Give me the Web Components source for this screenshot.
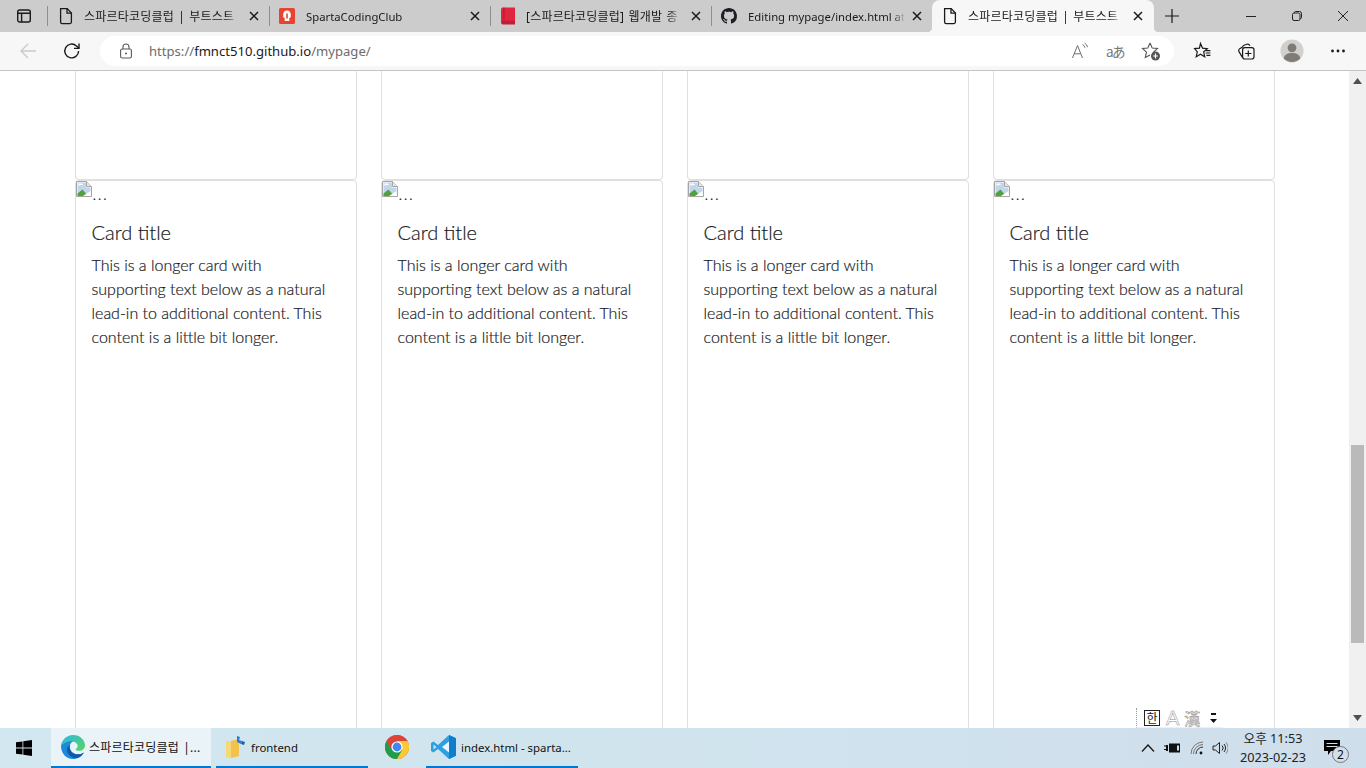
<!DOCTYPE html>
<html>
<head>
<meta charset="utf-8">
<title>스파르타코딩클럽 | 부트스트랩</title>
<style>
  html, body { margin: 0; height: 100%; overflow: hidden; }
  body { font-family: "Noto Sans", "Noto Sans CJK KR", sans-serif; }
</style>
</head>
<body>

<app-window>
  <tab-strip>
    <browser-tab label="스파르타코딩클럽 | 부트스트" icon="page"></browser-tab>
    <browser-tab label="SpartaCodingClub" icon="sparta" latin></browser-tab>
    <browser-tab label="[스파르타코딩클럽] 웹개발 종" icon="book"></browser-tab>
    <browser-tab label="Editing mypage/index.html at" icon="github" latin last></browser-tab>
    <browser-tab label="스파르타코딩클럽 | 부트스트" icon="page" active></browser-tab>
  </tab-strip>
  <address-bar></address-bar>
  <page-view>
    <card-grid>
      <info-card stub></info-card>
      <info-card stub></info-card>
      <info-card stub></info-card>
      <info-card stub></info-card>
      <info-card title="Card title">This is a longer card with supporting text below as a natural lead-in to additional content. This content is a little bit longer.</info-card>
      <info-card title="Card title">This is a longer card with supporting text below as a natural lead-in to additional content. This content is a little bit longer.</info-card>
      <info-card title="Card title">This is a longer card with supporting text below as a natural lead-in to additional content. This content is a little bit longer.</info-card>
      <info-card title="Card title">This is a longer card with supporting text below as a natural lead-in to additional content. This content is a little bit longer.</info-card>
    </card-grid>
    <ime-bar></ime-bar>
    <page-scrollbar></page-scrollbar>
  </page-view>
  <task-bar></task-bar>
</app-window>

<script>
const TAB_ICONS = {
  page: `<svg width="16" height="18" viewBox="0 0 16 18" fill="none" stroke="#1a1a1a" stroke-width="1.3"><path d="M2.600 1.600h6.600l4.200 4.400v9a1.600 1.600 0 0 1-1.600 1.600H4.200a1.600 1.600 0 0 1-1.600-1.600z"/><path d="M9 1.600v4.600h4.400"/></svg>`,
  sparta: `<svg width="16" height="16" viewBox="0 0 16 16"><rect width="16" height="16" rx="1.500" fill="#e8432e"/><path d="M8 2.600c2.600 0 3.800 1.700 3.800 4v2.600l-1.500.9v2.900H5.700v-2.900l-1.500-.9V6.600c0-2.300 1.200-4 3.800-4z" fill="#fff"/><path d="M7.200 5.400h1.600v5H7.200z" fill="#e8432e"/></svg>`,
  book: `<svg width="16" height="18" viewBox="0 0 16 18"><path d="M1 2.400A1.800 1.800 0 0 1 2.800.6H15v13.600H3A2 2 0 0 0 1 16z" fill="#e0263f"/><path d="M1 15.600a2 2 0 0 1 2-1.800h12v3.600H2.800A1.800 1.800 0 0 1 1 15.600z" fill="#c41d33"/><path d="M3.400.6h1v13h-1z" fill="#b3182d"/></svg>`,
  github: `<svg width="16" height="16" viewBox="0 0 16 16" fill="#1b1f23"><path d="M8 0C3.580 0 0 3.580 0 8c0 3.540 2.290 6.530 5.470 7.590.4.070.55-.17.55-.38 0-.19-.01-.82-.01-1.490-2.010.37-2.530-.49-2.690-.94-.09-.23-.48-.94-.82-1.130-.28-.15-.68-.52-.01-.53.63-.01 1.080.58 1.230.82.72 1.210 1.870.87 2.330.66.070-.52.28-.87.51-1.070-1.780-.2-3.640-.89-3.640-3.950 0-.87.31-1.590.82-2.150-.08-.2-.36-1.020.08-2.120 0 0 .67-.21 2.200.82.64-.18 1.320-.27 2-.27s1.360.09 2 .27c1.530-1.040 2.200-.82 2.200-.82.44 1.100.16 1.920.08 2.120.51.56.82 1.270.82 2.150 0 3.070-1.870 3.750-3.650 3.950.29.25.54.73.54 1.480 0 1.070-.01 1.930-.01 2.200 0 .21.15.46.55.38A8.010 8.010 0 0 0 16 8c0-4.420-3.580-8-8-8z"/></svg>`
};

class TabStrip extends HTMLElement {
  constructor() {
    super();
    this.attachShadow({ mode: 'open' });
    this.shadowRoot.innerHTML = `
    <style>
      :host { display: flex; height: 32px; background: #cccccc; }
      .side { width: 48px; display: flex; align-items: center; justify-content: center; position: relative; padding-right: 1px; box-sizing: border-box; }
      .sep { position: absolute; left: 47px; top: 6px; height: 20px; width: 1px; background: #8f8f8f; }
      .tabs { display: flex; }
      .plus { width: 36px; display: flex; align-items: center; justify-content: center; }
      .spacer { flex: 1; }
      .ctl { width: 46px; display: flex; align-items: center; justify-content: center; }
    </style>
    <div class="side">
      <svg width="16" height="16" viewBox="0 0 16 16" fill="none" stroke="#1a1a1a" stroke-width="1.4"><rect x="1.700" y="2" width="12.600" height="12" rx="2"/><path d="M1.700 5.200h12.600M5.600 5.200V14"/></svg>
      <span class="sep"></span>
    </div>
    <div class="tabs"><slot></slot></div>
    <div class="plus"><svg width="16" height="16" viewBox="0 0 16 16" stroke="#1a1a1a" stroke-width="1.2"><path d="M8 1v14M1 8h14"/></svg></div>
    <div class="spacer"></div>
    <div class="ctl"><svg width="12" height="12" viewBox="0 0 12 12" stroke="#222" stroke-width="1"><path d="M1 6.500h10"/></svg></div>
    <div class="ctl"><svg width="12" height="12" viewBox="0 0 12 12" fill="none" stroke="#222" stroke-width="1"><rect x="1.500" y="3" width="7.500" height="7.500" rx="1.500"/><path d="M3.500 3V2.500a1 1 0 0 1 1-1h4a2 2 0 0 1 2 2v4a1 1 0 0 1-1 1H9"/></svg></div>
    <div class="ctl"><svg width="12" height="12" viewBox="0 0 12 12" stroke="#222" stroke-width="1"><path d="M1 1l10 10M11 1L1 11"/></svg></div>
    `;
  }
}

class BrowserTab extends HTMLElement {
  connectedCallback() {
    const label = this.getAttribute('label');
    const icon = TAB_ICONS[this.getAttribute('icon')];
    this.attachShadow({ mode: 'open' });
    this.shadowRoot.innerHTML = `
    <style>
      :host { display: flex; align-items: center; width: 221px; height: 32px; box-sizing: border-box; padding: 0 9px 0 10px; position: relative; font: 12px "Noto Sans", "Noto Sans CJK KR", sans-serif; letter-spacing: .2px; word-spacing: 1px; color: #1a1a1a; }
      :host([latin]) { font-size: 11.3px; letter-spacing: 0; word-spacing: 0; }
      :host([latin]) .icon { margin-right: 11px; }
      :host([latin]) .close { margin-left: 5px; }
      :host([active]) { width: 222px; padding-right: 10px; background: #f7f7f7; border-radius: 8px 8px 0 0; }
      :host(:not([active]):not([last]))::after { content: ""; position: absolute; right: -1px; top: 6px; height: 20px; width: 1px; background: #8f8f8f; z-index: 1; }
      :host([active])::before, :host([active])::after { content: ""; position: absolute; bottom: 0; width: 5px; height: 5px; }
      :host([active])::before { left: -5px; background: radial-gradient(circle at 0 0, transparent 5px, #f7f7f7 5.500px); }
      :host([active])::after { right: -5px; background: radial-gradient(circle at 100% 0, transparent 5px, #f7f7f7 5.500px); }
      .icon { width: 16px; height: 18px; flex: none; display: flex; align-items: center; justify-content: center; margin-right: 10px; }
      .label { flex: 1; min-width: 0; white-space: nowrap; overflow: hidden; -webkit-mask-image: linear-gradient(to left, transparent 0, #000 14px); mask-image: linear-gradient(to left, transparent 0, #000 14px); }
      .close { width: 12px; height: 12px; margin-left: 8px; flex: none; }
    </style>
    <span class="icon">${icon}</span>
    <span class="label">${label}</span>
    <svg class="close" viewBox="0 0 12 12" stroke="#1a1a1a" stroke-width="1.500"><path d="M2 2l8 8M10 2l-8 8"/></svg>
    `;
  }
}

class AddressBar extends HTMLElement {
  constructor() {
    super();
    this.attachShadow({ mode: 'open' });
    this.shadowRoot.innerHTML = `
    <style>
      :host { display: flex; align-items: center; height: 39px; box-sizing: border-box; background: #f7f7f7; border-bottom: 1px solid #c4c4c4; padding-left: 100px; position: relative; }
      .nav { position: absolute; top: 10px; }
      .pill { width: 1074px; height: 30px; box-sizing: border-box; background: #fff; border-radius: 15px; display: flex; align-items: center; padding: 0 13px 0 18px; }
      .url { margin-left: 15px; font: 13.1px "Noto Sans", sans-serif; color: #6c6c6c; flex: 1; white-space: nowrap; }
      .url b { font-weight: 400; color: #1a1a1a; }
      .right { display: flex; gap: 17px; align-items: center; }
      .trans { width: 18px; font: 13.500px/18px "Noto Sans CJK JP", sans-serif; color: #777; letter-spacing: -1.500px; white-space: nowrap; }
      .tools { display: flex; align-items: center; margin-left: 18px; }
      .tools > * { flex: none; }
    </style>
    <svg class="nav" style="left:19px" width="18" height="18" viewBox="0 0 18 18" fill="none" stroke="#c9c9c9" stroke-width="1.300"><path d="M17 9H2M9 2L2 9l7 7"/></svg>
    <svg class="nav" style="left:63px" width="18" height="18" viewBox="0 0 18 18" fill="none" stroke="#1a1a1a" stroke-width="1.400"><path d="M15.600 9a6.900 6.900 0 1 1-2.200-5.100L16 6.300"/><path d="M16 1.400v5h-5"/></svg>
    <div class="pill">
      <svg width="16" height="16" viewBox="0 0 16 16" fill="none" stroke="#5a5a5a" stroke-width="1.100"><rect x="2.600" y="6" width="10.800" height="9" rx="1.600"/><path d="M5 6V4a3 3 0 0 1 6 0v2"/><circle cx="8" cy="10.500" r="1" fill="#5a5a5a" stroke="none"/></svg>
      <span class="url">https://<b>fmnct510.github.io</b>/mypage/</span>
      <span class="right">
        <svg width="18" height="18" viewBox="0 0 18 18" fill="none" stroke="#6e6e6e" stroke-width="1"><path d="M1.500 16L6.500 3.500 11.500 16M3.300 11.800h6.400"/><path d="M11.500 2.500a5 5 0 0 1 2.500 3.200M13.600 1a7 7 0 0 1 3 4.200"/></svg>
        <span class="trans">aあ</span>
        <svg width="20" height="20" viewBox="0 0 20 20" fill="none" stroke="#555" stroke-width="1.100"><path d="M9 2l2.200 5 5.300.5-4 3.600 1 4.200M9 2L6.800 7l-5.300.5 4 3.600-1.200 5.300L9 14"/><circle cx="14.500" cy="15" r="4.500" fill="#555" stroke="none"/><path d="M14.500 12.600v4.800M12.100 15h4.800" stroke="#fff"/></svg>
      </span>
    </div>
    <div class="tools">
      <svg width="20" height="20" viewBox="0 0 20 20" fill="none" stroke="#1a1a1a" stroke-width="1.200"><path d="M8.500 2.500l2 4.600 4.800.5-3.600 3.200 1 4.900-4.200-2.500-4.300 2.500 1.100-4.900L2.600 7.600l4.800-.5z"/><path d="M14 9.600h4.400M13.600 12h4.800M14.400 14.400h4"/></svg>
      <svg style="margin-left:24px" width="20" height="20" viewBox="0 0 20 20" fill="none" stroke="#1a1a1a" stroke-width="1.200"><rect x="6.600" y="6.600" width="11.400" height="11.400" rx="2.200"/><path d="M12.300 9.400v6.200M9.200 12.500h6.200"/><path d="M6.400 16.400L3 10.600a2 2 0 0 1 .7-2.800l3.600-2.200M13.800 4.700a2.400 2.400 0 0 0-3-1.400L8 4.300a2 2 0 0 0-1.300 2"/></svg>
      <svg style="margin-left:24px" width="24" height="24" viewBox="0 0 24 24"><circle cx="12" cy="12" r="11.500" fill="#d2d0ce"/><circle cx="12" cy="8.800" r="4.400" fill="#7f7c78"/><path d="M3.800 19.500c.6-3.800 3.600-5.400 8.200-5.400s7.600 1.600 8.200 5.400a11.500 11.500 0 0 1-16.400 0z" fill="#7f7c78"/></svg>
      <svg style="margin-left:26px" width="16" height="16" viewBox="0 0 16 16" fill="#1a1a1a"><circle cx="2.500" cy="8" r="1.400"/><circle cx="8" cy="8" r="1.400"/><circle cx="13.500" cy="8" r="1.400"/></svg>
    </div>
    `;
  }
}

class PageView extends HTMLElement {
  constructor() {
    super();
    this.attachShadow({ mode: 'open' });
    this.shadowRoot.innerHTML = `
    <style>
      :host { display: block; height: 657px; overflow: hidden; background: #fff; position: relative; box-sizing: border-box; padding-left: 75px; }
    </style>
    <slot></slot>
    `;
  }
}

class CardGrid extends HTMLElement {
  constructor() {
    super();
    this.attachShadow({ mode: 'open' });
    this.shadowRoot.innerHTML = `
    <style>
      :host { display: grid; grid-template-columns: repeat(4, 282px); column-gap: 24px; grid-template-rows: 109px 600px; }
    </style>
    <slot></slot>
    `;
  }
}

class InfoCard extends HTMLElement {
  connectedCallback() {
    this.attachShadow({ mode: 'open' });
    const stub = this.hasAttribute('stub');
    this.shadowRoot.innerHTML = `
    <style>
      :host { display: block; box-sizing: border-box; border: 1px solid #dfdfdf; border-radius: 4px; background: #fff; font-family: "Lato", "Noto Sans", sans-serif; font-weight: 300; color: #15181b; -webkit-text-stroke: .2px #212529; }
      :host([stub]) { border-top: 0; border-radius: 0 0 4px 4px; }
      .top { display: flex; align-items: flex-end; height: 24px; font-size: 16px; line-height: 14px; }
      .top span { letter-spacing: 1.500px; margin: 0 0 4px .5px; }
      .body { padding: 16px 16px 16px 15.500px; padding-top: 15px; }
      h5 { margin: 0 0 9px; font-size: 20px; font-weight: 300; line-height: 24px; }
      p { margin: 0; font-size: 16px; line-height: 24px; }
    </style>
    ${stub ? '' : `
    <div class="top">
      <svg width="16" height="16" viewBox="0 0 16 16" style="align-self:flex-start"><path d="M.5.5h10l5 5v10H.5z" fill="#fff" stroke="#a6a6a6"/><path d="M10.500.5v5h5" fill="#e6e6e6" stroke="#a6a6a6"/><path d="M1.500 1.500h8.500v5h4.500v6.500L1.500 14z" fill="#c3d4ef"/><path d="M2.500 2.500h3.500l1 1.500H4l-1.500 1z" fill="#fff"/><path d="M1.500 15V12.500l5-4 5.500 6.500z" fill="#4fa33a"/><path d="M7 15l7.500-5v5z" fill="#fff"/></svg>
      <span>...</span>
    </div>
    <div class="body">
      <h5>${this.getAttribute('title')}</h5>
      <p><slot></slot></p>
    </div>`}
    `;
  }
}

class ImeBar extends HTMLElement {
  constructor() {
    super();
    this.attachShadow({ mode: 'open' });
    this.shadowRoot.innerHTML = `
    <style>
      :host { position: absolute; left: 1136px; top: 637px; width: 87px; height: 20px; display: flex; align-items: center; background: #fff; border-left: 1px dotted #999; box-sizing: border-box; font: 13px "Noto Sans CJK KR", sans-serif; color: #222; padding-left: 7px; border-bottom: 1px solid #f0f0f0; }
      .han { width: 14px; height: 14px; border: 1px solid #222; display: flex; align-items: center; justify-content: center; font-size: 12px; line-height: 14px; flex: none; }
      .ghost { font: 20px/20px "Liberation Sans", sans-serif; color: #fff; -webkit-text-stroke: .5px #8a8a8a; margin-left: 6px; flex: none; }
      .ghost.h { font: 16px/20px "Noto Sans CJK KR", sans-serif; margin-left: 5px; }
      .more { margin-left: 10px; flex: none; }
    </style>
    <span class="han">한</span>
    <span class="ghost">A</span>
    <span class="ghost h">漢</span>
    <svg class="more" width="7" height="12" viewBox="0 0 7 12" fill="#111"><path d="M1 1h5v2H1zM0 7h7L3.500 11z"/></svg>
    `;
  }
}

class PageScrollbar extends HTMLElement {
  constructor() {
    super();
    this.attachShadow({ mode: 'open' });
    this.shadowRoot.innerHTML = `
    <style>
      :host { position: absolute; right: 0; top: 0; bottom: 0; width: 17px; background: #f0f0f0; }
      .thumb { position: absolute; left: 2px; right: 2px; top: 374px; height: 198px; background: #bababa; }
      svg { position: absolute; left: 4px; }
    </style>
    <svg style="top:7px" width="9" height="6" viewBox="0 0 9 6" fill="#505050"><path d="M4.500 0L9 6H0z"/></svg>
    <div class="thumb"></div>
    <svg style="bottom:7px" width="9" height="6" viewBox="0 0 9 6" fill="#505050"><path d="M0 0h9L4.500 6z"/></svg>
    `;
  }
}

class TaskBar extends HTMLElement {
  constructor() {
    super();
    this.attachShadow({ mode: 'open' });
    this.shadowRoot.innerHTML = `
    <style>
      :host { display: flex; height: 40px; background: linear-gradient(to right, #d2e7ef 0, #d0e4ee 45%, #cfdeeb 100%); font: 12px "Noto Sans", "Noto Sans CJK KR", sans-serif; color: #111; }
      .start { width: 51px; display: flex; align-items: center; justify-content: center; flex: none; padding-right: 4px; box-sizing: border-box; }
      .item { display: flex; align-items: center; height: 40px; box-sizing: border-box; border-bottom: 2px solid #0078d4; flex: none; padding-left: 9px; gap: 4px; white-space: nowrap; font-size: 11.400px; }
      .item.active { background: #eaf3f8; width: 160px; font-size: 12px; letter-spacing: .2px; word-spacing: 1px; padding-left: 10px; }
      .bare { border-bottom-color: transparent; }
      .tray { margin-left: auto; display: flex; align-items: center; height: 40px; padding-right: 15px; }
      .clock { width: 78px; text-align: center; font-size: 12.700px; line-height: 19px; color: #222; margin-left: 6px; }
      .bell { position: relative; width: 36px; margin-left: 3px; display: flex; justify-content: center; }
      .count { position: absolute; left: 17px; top: 6px; width: 15px; height: 15px; border-radius: 50%; border: 1px solid #777; background: #d3e0eb; font-size: 12px; line-height: 15px; text-align: center; }
    </style>
    <div class="start"><svg width="16" height="16" viewBox="0 0 16 16" fill="#000"><path d="M0 2.300l6.500-.9v6.200H0zM7.300 1.300L16 0v7.600H7.300zM0 8.400h6.500v6.200L0 13.700zM7.300 8.400H16V16l-8.700-1.300z"/></svg></div>
    <div class="item active">
      <svg width="24" height="24" viewBox="0 0 24 24"><defs><linearGradient id="e1" x1="0" y1="0" x2="1" y2="1"><stop offset="0" stop-color="#2fb7e8"/><stop offset="1" stop-color="#5ad65a"/></linearGradient></defs><path d="M0 11C0 18 5 24 12 24 17 24 21 21 23 17.400 20 19.500 16 20 13 18.500 9.500 16.800 8 13 9 10 10 7 12 6 14 6 8 3 1 6 0 11z" fill="#1e88d9"/><path d="M9 10C8 13 9.500 16.800 13 18.500 16 20 20 19.500 23 17.400 21.500 20 19 22 16 23 11 23.500 6.500 20 6 15 5.800 13 7 11 9 10z" fill="#0f5aa8"/><path d="M0 11C.5 5 5.500 0 12 0 19 0 24 5 24 10.500 24 13.500 21.500 15.800 18.500 15.800 16.500 15.800 14.800 15.300 14.500 14.300 16.500 13 17 11.300 16.500 9.800 15.500 7 12 5.800 9 6.200 5 6.800 1.500 8.500 0 11z" fill="url(#e1)"/></svg>
      <span>스파르타코딩클럽 |...</span>
    </div>
    <div class="item" style="width:152px;margin-left:5px;">
      <svg width="22" height="24" viewBox="0 0 22 24"><path d="M1 6h5l8-2v17l-8 2-5-1z" fill="#f8d775"/><path d="M6 6l8-2v17l-8 2z" fill="#f1c24e"/><path d="M12 1l3 1-1 3 3 1-1 3-4-2z" fill="#2b7cd3"/><path d="M17 6l3 1-1 3-3-1z" fill="#1e5fa8"/></svg>
      <span>frontend</span>
    </div>
    <div class="item bare" style="width:58px;padding-left:17px;">
      <svg width="24" height="24" viewBox="0 0 24 24"><circle cx="12" cy="12" r="12" fill="#db4437"/><path d="M12 24a12 12 0 0 0 10.400-18H12z" fill="#fcc934"/><path d="M1.600 6a12 12 0 0 0 10.400 18l5.200-9-5.200-3-5.200 3z" fill="#1e9e4a"/><path d="M12 6h10.400A12 12 0 0 0 1.600 6l5.200 9z" fill="#db4437"/><circle cx="12" cy="12" r="5.600" fill="#fff"/><circle cx="12" cy="12" r="4.400" fill="#4285f4"/></svg>
    </div>
    <div class="item" style="width:152px;padding-left:5px;">
      <svg width="26" height="24" viewBox="0 0 26 24"><path d="M18 0l7 3.200v17.600L18 24 7 14l-4.500 3.500L0 16V8l2.500-1.500L7 10z" fill="#2d9fe3"/><path d="M18 6.500L11 12l7 5.500z" fill="#fff" opacity=".9"/><path d="M18 0l7 3.200v17.600L18 24z" fill="#0f7fcc"/><path d="M2.500 9.500L5.500 12l-3 2.500z" fill="#d0e4ee"/></svg>
      <span>index.html - sparta...</span>
    </div>
    <div class="tray">
      <svg width="14" height="10" viewBox="0 0 14 10" fill="none" stroke="#111" stroke-width="1.200"><path d="M1 8.500L7 2l6 6.500"/></svg>
      <svg style="margin-left:9px" width="17" height="12" viewBox="0 0 17 12"><path d="M0 3.500h2v1H0zM0 7h2v1H0z" fill="#111"/><path d="M2 3h2v6H2z" fill="#111"/><rect x="5" y="1.500" width="11" height="9" fill="#111"/><rect x="13" y="3.500" width="2" height="5" fill="#d0e0eb"/></svg>
      <svg style="margin-left:9px" width="14" height="14" viewBox="0 0 14 14" fill="none" stroke="#333" stroke-width="1"><path d="M1 13A12 12 0 0 1 13 1M3.500 13A9.500 9.500 0 0 1 13 3.500" stroke="#777"/><path d="M6 13a7 7 0 0 1 7-7"/><circle cx="11" cy="12" r="1.400" fill="#111" stroke="none"/></svg>
      <svg style="margin-left:8px" width="16" height="14" viewBox="0 0 16 14" fill="none" stroke="#222" stroke-width="1"><path d="M1 5h2.500L7.500 1.500v11L3.500 9H1z"/><path d="M10 4.500a3.500 3.500 0 0 1 0 5M12 3a6 6 0 0 1 0 8"/><path d="M14 1.500a8 8 0 0 1 0 11" stroke="#888"/></svg>
      <div class="clock">오후 11:53<br>2023-02-23</div>
      <div class="bell">
        <svg width="18" height="17" viewBox="0 0 18 17" fill="#000"><path d="M0 0h16v11H7l-3 4v-4H0z"/><path d="M2.500 3h11v1h-11zM2.500 6h11v1h-11z" fill="#d3e0eb"/></svg>
        <span class="count">2</span>
      </div>
    </div>
    `;
  }
}

class AppWindow extends HTMLElement {
  constructor() {
    super();
    this.attachShadow({ mode: 'open' });
    this.shadowRoot.innerHTML = `
    <style>
      :host { display: flex; flex-direction: column; width: 1366px; height: 768px; }
    </style>
    <slot></slot>
    `;
  }
}

customElements.define('app-window', AppWindow);
customElements.define('tab-strip', TabStrip);
customElements.define('browser-tab', BrowserTab);
customElements.define('address-bar', AddressBar);
customElements.define('page-view', PageView);
customElements.define('card-grid', CardGrid);
customElements.define('info-card', InfoCard);
customElements.define('ime-bar', ImeBar);
customElements.define('page-scrollbar', PageScrollbar);
customElements.define('task-bar', TaskBar);
</script>
</body>
</html>
